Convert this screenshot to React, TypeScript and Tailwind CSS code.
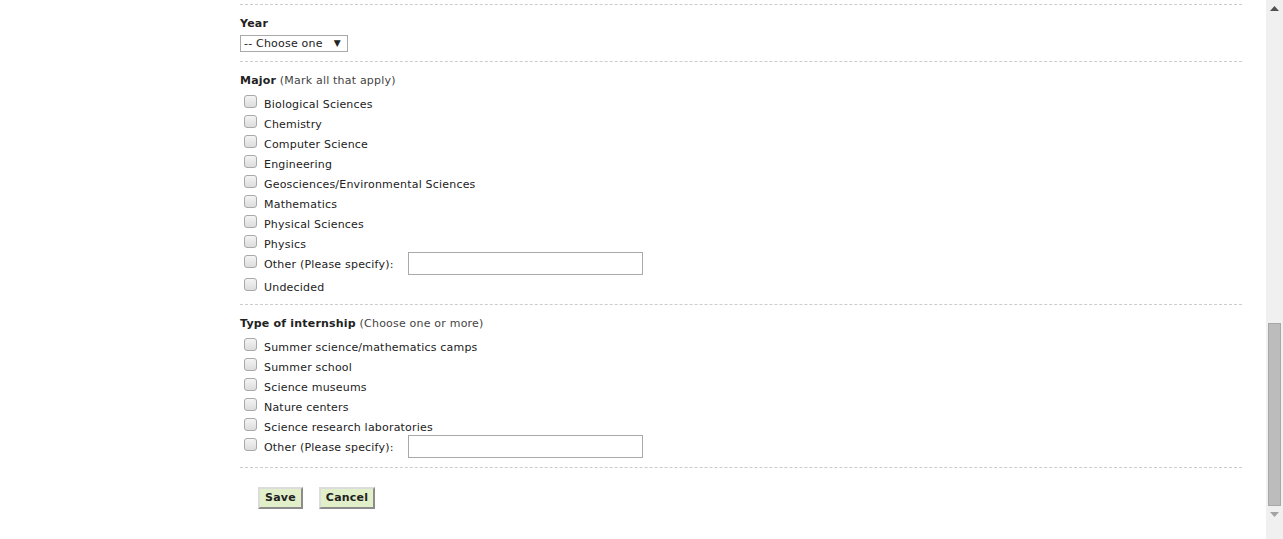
import React from "react";

const font = { fontFamily: '"DejaVu Sans", Verdana, sans-serif' };

function Box() {
  return (
    <span className="mt-[2px] ml-[4px] mr-[7px] inline-block h-[13px] w-[13px] shrink-0 rounded-[3px] border border-[#a9a9a9] bg-gradient-to-b from-[#f4f4f4] to-[#dcdcdc]" />
  );
}

function Item({ label, other }: { label: string; other?: boolean }) {
  return (
    <div className={`flex items-start ${other ? "h-[23px]" : "h-[20px]"}`}>
      <Box />
      <span className={`leading-[20px] mt-[2px] ${other ? "w-[144px] shrink-0" : ""}`}>{label}</span>
      {other && (
        <input
          type="text"
          className="h-[23px] w-[235px] -mt-[1px] border border-[#a9a9a9] bg-white outline-none"
        />
      )}
    </div>
  );
}

function Buttonish({ children, w }: { children: React.ReactNode; w: string }) {
  return (
    <button
      className={`${w} h-[22px] border-2 border-t-[#dcdcdc] border-l-[#dcdcdc] border-b-[#8c8c8c] border-r-[#8c8c8c] bg-[#e1f0c8] text-[11px] font-bold text-[#222]`}
    >
      {children}
    </button>
  );
}

const majors = [
  "Biological Sciences",
  "Chemistry",
  "Computer Science",
  "Engineering",
  "Geosciences/Environmental Sciences",
  "Mathematics",
  "Physical Sciences",
  "Physics",
];

const types = [
  "Summer science/mathematics camps",
  "Summer school",
  "Science museums",
  "Nature centers",
  "Science research laboratories",
];

export default function App() {
  return (
    <div
      className="flex h-[539px] w-[1283px] overflow-hidden bg-white text-[11px] tracking-[0.2px] text-[#222]"
      style={font}
    >
      <div className="flex-1 pl-[240px] pr-[24px] pt-[4px]">
        {/* Year */}
        <div className="border-t border-dashed border-[#cccccc] pt-[11px] pb-[9px]">
          <div className="leading-[16px] font-bold">Year</div>
          <div className="mt-[3px] flex h-[17px] w-[108px] items-center border border-[#a9a9a9] bg-white pl-[3px]">
            <span className="leading-[15px]">-- Choose one</span>
            <span className="ml-[11px] text-[9px] leading-[15px]">▼</span>
          </div>
        </div>
        {/* Major */}
        <div className="border-t border-dashed border-[#cccccc] pt-[11px] pb-[8px]">
          <div className="leading-[16px]">
            <span className="font-bold">Major</span> <span className="text-[#444]">(Mark all that apply)</span>
          </div>
          <div className="mt-[4px]">
            {majors.map((m) => (
              <Item key={m} label={m} />
            ))}
            <Item label="Other (Please specify):" other />
            <Item label="Undecided" />
          </div>
        </div>
        {/* Type */}
        <div className="border-t border-dashed border-[#cccccc] pt-[11px] pb-[8px]">
          <div className="leading-[16px]">
            <span className="font-bold">Type of internship</span>{" "}
            <span className="text-[#444]">(Choose one or more)</span>
          </div>
          <div className="mt-[4px]">
            {types.map((m) => (
              <Item key={m} label={m} />
            ))}
            <Item label="Other (Please specify):" other />
          </div>
        </div>
        <div className="border-t border-dashed border-[#cccccc] pt-[19px] pl-[18px]">
          <div className="flex gap-[16px]">
            <Buttonish w="w-[45px]">Save</Buttonish>
            <Buttonish w="w-[56px]">Cancel</Buttonish>
          </div>
        </div>
      </div>
      {/* scrollbar */}
      <div className="flex h-full w-[17px] flex-col items-center bg-[#f0f0f0]">
        <div className="flex h-[17px] w-full items-center justify-center">
          <svg width="9" height="5" viewBox="0 0 9 5">
            <path d="M4.5 0 L9 5 L0 5 Z" fill="#505050" />
          </svg>
        </div>
        <div className="flex-1" />
        <div className="h-[183px] w-[13px] border border-[#a8a8a8] bg-[#bcbcbc]" />
        <div className="flex h-[17px] w-full items-center justify-center">
          <svg width="9" height="5" viewBox="0 0 9 5">
            <path d="M0 0 L9 0 L4.5 5 Z" fill="#a3a3a3" />
          </svg>
        </div>
        <div className="h-[16px]" />
      </div>
    </div>
  );
}
